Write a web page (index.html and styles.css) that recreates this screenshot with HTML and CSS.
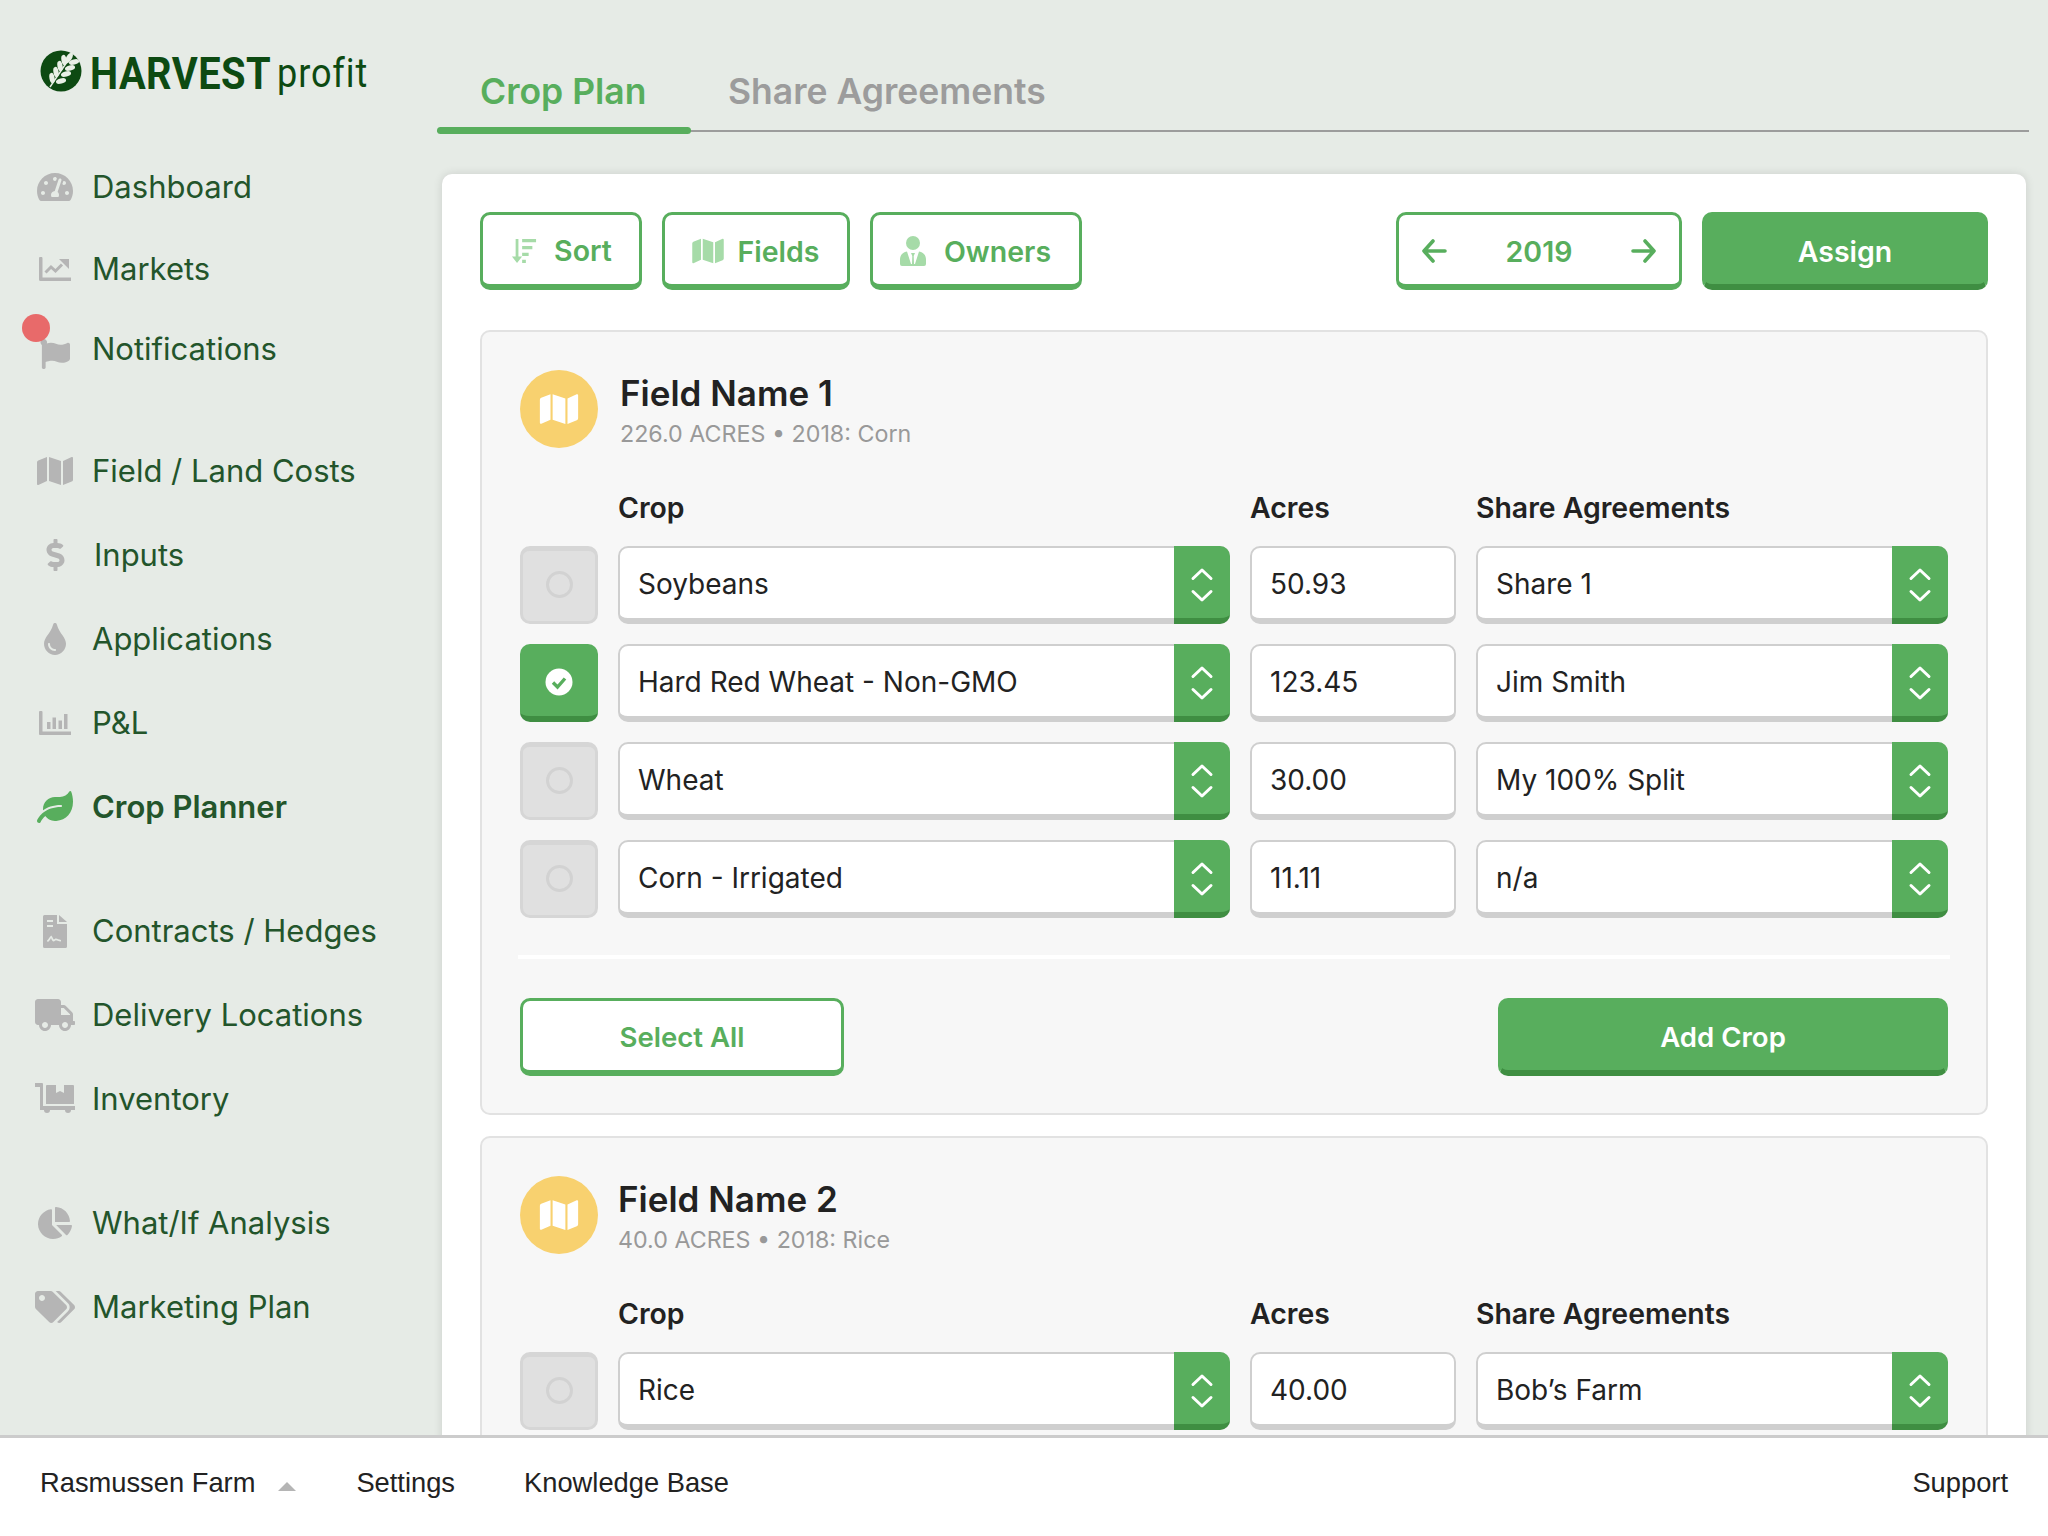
FILE: index.html
```html
<!DOCTYPE html>
<html lang="en">
<head>
  <meta charset="UTF-8" />
  <title>Harvest Profit - Crop Plan</title>
  <link rel="stylesheet" href="styles.css">
</head>
<body>
  <svg class="sprite" xmlns="http://www.w3.org/2000/svg">
    <symbol id="i-dash" viewBox="0 0 576 512"><path d="M288 32C128.94 32 0 160.94 0 320c0 52.8 14.25 102.26 39.06 144.8 5.61 9.62 16.3 15.2 27.44 15.2h443c11.14 0 21.83-5.58 27.44-15.2C561.75 422.26 576 372.8 576 320c0-159.06-128.94-288-288-288zm0 64c14.71 0 26.58 10.13 30.32 23.65-1.11 2.26-2.64 4.23-3.45 6.67l-9.22 27.67c-5.13 3.49-10.97 6.01-17.64 6.01-17.67 0-32-14.33-32-32S270.33 96 288 96zM96 384c-17.67 0-32-14.33-32-32s14.33-32 32-32 32 14.33 32 32-14.33 32-32 32zm48-160c-17.67 0-32-14.33-32-32s14.33-32 32-32 32 14.33 32 32-14.33 32-32 32zm246.77-72.41l-61.33 184C343.13 347.33 352 364.54 352 384c0 11.72-3.38 22.55-8.88 32H232.88c-5.5-9.45-8.88-20.28-8.88-32 0-33.94 26.5-61.43 59.9-63.59l61.34-184.01c4.17-12.56 17.73-19.45 30.36-15.17 12.57 4.19 19.35 17.79 15.17 30.36zm14.66 57.2l15.52-46.55c3.47-1.29 7.13-2.23 11.05-2.23 17.67 0 32 14.33 32 32s-14.33 32-32 32c-11.38-.01-20.89-6.28-26.57-15.22zM480 384c-17.67 0-32-14.33-32-32s14.33-32 32-32 32 14.33 32 32-14.33 32-32 32z"/></symbol>
    <symbol id="i-chart" viewBox="0 0 32 24"><path d="M0 1.500A1.500 1.500 0 0 1 3.500 1.500V20.500H32V24H1.500A1.500 1.500 0 0 1 0 22.500z"/><path d="M6.500 15.500l5.500-5.500 4.500 4 6.500-6.500" fill="none" stroke="currentColor" stroke-width="3"/><path d="M20 2h10v10z"/></symbol>
    <symbol id="i-flag" viewBox="0 0 512 512"><path d="M349.565 98.783C295.978 98.783 251.721 64 184.348 64c-24.955 0-47.309 4.384-68.045 12.013a55.947 55.947 0 0 0 3.586-23.562C118.117 24.015 94.806 1.206 66.338.048 34.345-1.254 8 24.296 8 56c0 19.026 9.497 35.825 24 45.945V488c0 13.255 10.745 24 24 24h16c13.255 0 24-10.745 24-24v-94.400c28.311-12.064 63.582-22.122 114.435-22.122 53.588 0 97.844 34.783 165.217 34.783 48.169 0 86.667-16.294 122.505-40.858C506.840 359.452 512 349.571 512 339.045v-243.100c0-23.393-24.269-38.870-45.485-29.016-34.338 15.948-76.454 31.854-116.950 31.854z"/></symbol>
    <symbol id="i-map" viewBox="0 0 576 512"><path d="M0 117.66v346.32c0 11.32 11.43 19.06 21.94 14.86L160 416V32L20.12 87.95A32.006 32.006 0 0 0 0 117.66zM192 416l192 64V96L192 32v384zM554.06 33.16L416 96v384l139.88-55.95A31.996 31.996 0 0 0 576 394.34V48.02c0-11.32-11.43-19.06-21.94-14.86z"/></symbol>
    <symbol id="i-dollar" viewBox="0 0 288 512"><path d="M209.2 233.4l-108-31.6C88.7 198.2 80 186.5 80 173.5c0-16.3 13.2-29.5 29.5-29.5h66.3c12.2 0 24.2 3.7 34.2 10.5 6.1 4.1 14.3 3.1 19.5-2l34.8-34c7.1-6.9 6.1-18.4-1.8-24.5C238 74.8 207.4 64.1 176 64V16c0-8.8-7.2-16-16-16h-32c-8.8 0-16 7.2-16 16v48h-2.5C45.8 64-5.4 118.7.5 183.6c4.2 46.1 39.4 83.6 83.8 96.6l102.5 30c12.5 3.7 21.2 15.3 21.2 28.3 0 16.3-13.2 29.5-29.5 29.5h-66.3C100 368 88 364.3 78 357.5c-6.1-4.1-14.3-3.1-19.5 2l-34.8 34c-7.1 6.9-6.1 18.4 1.8 24.5 24.5 19.2 55.1 29.9 86.5 30v48c0 8.8 7.2 16 16 16h32c8.8 0 16-7.2 16-16v-48.2c46.6-.9 90.3-28.6 105.7-72.7 21.5-61.6-14.6-124.8-72.5-141.7z"/></symbol>
    <symbol id="i-tint" viewBox="0 0 352 512"><path d="M205.22 22.09c-7.94-28.78-49.44-30.12-58.44 0C100.01 179.85 0 222.72 0 333.91 0 432.35 78.72 512 176 512s176-79.65 176-178.09c0-111.75-99.79-153.34-146.78-311.82zM176 448c-61.75 0-112-50.25-112-112 0-8.84 7.16-16 16-16s16 7.16 16 16c0 44.11 35.89 80 80 80 8.84 0 16 7.16 16 16s-7.16 16-16 16z"/></symbol>
    <symbol id="i-bars" viewBox="0 0 32 24"><path d="M0 1a1 1 0 0 1 1-1h1.500a1 1 0 0 1 1 1v19.500H32V24H1a1 1 0 0 1-1-1z"/><path d="M8 11h3.500v7H8zM13.500 6.500H17V18h-3.500zM19.500 9.500H23V18h-3.500zM25 3h3.500v15H25z"/></symbol>
    <symbol id="i-leaf" viewBox="0 0 576 512"><path d="M546.2 9.7c-5.6-12.5-21.6-13-28.3-1.2C486.9 62.4 431.4 96 368 96h-80C182 96 96 182 96 288c0 7 .8 13.7 1.5 20.5C161.3 262.8 253.4 224 384 224c8.8 0 16 7.2 16 16s-7.2 16-16 16C132.6 256 26 410.1 2.4 468c-6.6 16.3 1.2 34.9 17.5 41.6 16.4 6.8 35-1.100 41.800-17.300 1.500-3.600 20.900-47.900 71.900-90.600 32.400 43.900 94 85.800 174.900 77.200C465.500 465.900 576 348.500 576 171.300c0-51.600-11.100-114.600-29.800-161.600z"/></symbol>
    <symbol id="i-contract" viewBox="0 0 24 33"><path fill-rule="evenodd" d="M1.500 0H14v9h10v22.500a1.500 1.500 0 0 1-1.500 1.500h-21A1.500 1.500 0 0 1 0 31.500v-30A1.500 1.500 0 0 1 1.500 0zM4 5v2h6V5zM4 10v2h6v-2zM4 25.500l.6 1.500c1.400-.6 2.500-2 3.400-4 .8 2 1.500 3.500 2.600 3.500 1.200 0 1.500-1.200 2.400-1.200 1 0 2 1.200 5 1.200v-1.600c-2.200 0-3.400-1.300-5-1.300-1 0-1.600.7-2.200 1-.8-.9-1.300-2.700-2.600-4.100-1.600 1.500-2.600 3.700-4.200 5z"/><path d="M16 0l8 7h-8z"/></symbol>
    <symbol id="i-truck" viewBox="0 0 640 512"><path d="M624 352h-16V243.900c0-12.700-5.100-24.900-14.100-33.900L494 110.100c-9-9-21.200-14.100-33.900-14.100H416V48c0-26.500-21.500-48-48-48H48C21.500 0 0 21.500 0 48v320c0 26.500 21.500 48 48 48h16c0 53 43 96 96 96s96-43 96-96h128c0 53 43 96 96 96s96-43 96-96h48c8.800 0 16-7.200 16-16v-32c0-8.800-7.200-16-16-16zM160 464c-26.500 0-48-21.500-48-48s21.500-48 48-48 48 21.500 48 48-21.500 48-48 48zm320 0c-26.500 0-48-21.500-48-48s21.500-48 48-48 48 21.500 48 48-21.500 48-48 48zm80-208H416V144h44.100l99.900 99.900V256z"/></symbol>
    <symbol id="i-dolly" viewBox="0 0 40 32"><path d="M0 0h7a1 1 0 0 1 1 1v22h32v4h-4a3 3 0 0 1-6 0H15a3 3 0 0 1-6 0H5V4H0z"/><path fill-rule="evenodd" d="M12 2h26a1 1 0 0 1 1 1v18H11V3a1 1 0 0 1 1-1zm9 0v8l4-2 4 2V2z"/></symbol>
    <symbol id="i-pie" viewBox="0 0 544 512"><path d="M527.790 288H290.500l158.030 158.030c6.040 6.040 15.980 6.530 22.190.68 38.700-36.460 65.320-85.610 73.130-140.860 1.340-9.460-6.510-17.850-16.060-17.850zm-15.830-64.800C503.720 103.740 408.260 8.280 288.800.04 279.680-.59 272 7.100 272 16.240V240h223.770c9.140 0 16.820-7.680 16.190-16.800zM224 288V50.710c0-9.550-8.390-17.400-17.840-16.060C86.990 51.490-4.100 155.600.14 280.370 4.500 408.510 114.830 513.590 243.030 511.980c50.400-.63 96.970-16.870 135.260-44.030 7.900-5.600 8.420-17.230 1.570-24.080L224 288z"/></symbol>
    <symbol id="i-tags" viewBox="0 0 640 512"><path d="M497.941 225.941L286.059 14.059A48 48 0 0 0 252.118 0H48C21.490 0 0 21.490 0 48v204.118a48 48 0 0 0 14.059 33.941l211.882 211.882c18.744 18.745 49.136 18.746 67.882 0l204.118-204.118c18.745-18.745 18.745-49.137 0-67.882zM112 160c-26.510 0-48-21.490-48-48s21.490-48 48-48 48 21.490 48 48-21.490 48-48 48zm513.941 133.823L421.823 497.941c-18.745 18.745-49.137 18.745-67.882 0l-.36-.36L527.640 323.522c16.999-16.999 26.360-39.600 26.360-63.640s-9.362-46.641-26.360-63.640L331.397 0h48.721a48 48 0 0 1 33.941 14.059l211.882 211.882c18.745 18.745 18.745 49.137 0 67.882z"/></symbol>
    <symbol id="i-sort" viewBox="0 0 28 28"><path d="M5 1h3v19h4l-5.500 7L1 20h4z"/><path d="M12 1h15v3.500H12zM12 8.500h11V12H12zM12 16h7v3.500h-7zM12 23.500h4V27h-4z"/></symbol>
    <symbol id="i-owner" viewBox="0 0 26 30"><circle cx="13" cy="7" r="7"/><path d="M7 15.500L11 28h1l.3-8-1.300-3h4l-1.300 3 .3 8h1l4-12.500c4 .5 7 3.500 7 8V28a2 2 0 0 1-2 2H2a2 2 0 0 1-2-2v-4.500c0-4.500 3-7.500 7-8z"/></symbol>
    <symbol id="i-updown" viewBox="0 0 24 36"><path d="M3 11.500L12 3l9 8.500M3 24.500l9 8.500 9-8.500" fill="none" stroke="currentColor" stroke-width="3" stroke-linecap="round" stroke-linejoin="round"/></symbol>
    <symbol id="i-left" viewBox="0 0 26 24"><path d="M12 2L3 12l9 10M3 12h21" fill="none" stroke="currentColor" stroke-width="3.600" stroke-linecap="round" stroke-linejoin="round"/></symbol>
    <symbol id="i-right" viewBox="0 0 26 24"><path d="M14 2l9 10-9 10M23 12H2" fill="none" stroke="currentColor" stroke-width="3.600" stroke-linecap="round" stroke-linejoin="round"/></symbol>
  </svg>

  <div class="app">
    <div class="top">
      <aside class="sidebar">
        <div class="logo">
          <svg class="logo-mark" viewBox="0 0 42 42">
            <circle cx="21" cy="21" r="20.500" fill="#0d4a12"/>
            <g fill="#e9f0e6">
              <path d="M10 37L29 9" stroke="#e9f0e6" stroke-width="1.400"/>
              <ellipse cx="29" cy="8" rx="2.800" ry="6" transform="rotate(32 29 8)"/>
              <ellipse cx="24" cy="10" rx="2.600" ry="5.200" transform="rotate(-10 24 10)"/>
              <ellipse cx="34" cy="12" rx="2.600" ry="5.200" transform="rotate(75 34 12)"/>
              <ellipse cx="20" cy="16" rx="2.600" ry="5.200" transform="rotate(-10 20 16)"/>
              <ellipse cx="30" cy="18" rx="2.600" ry="5.200" transform="rotate(75 30 18)"/>
              <ellipse cx="16" cy="22" rx="2.600" ry="5.200" transform="rotate(-10 16 22)"/>
              <ellipse cx="26" cy="24" rx="2.600" ry="5.200" transform="rotate(75 26 24)"/>
              <ellipse cx="12" cy="28" rx="2.600" ry="5.200" transform="rotate(-10 12 28)"/>
              <ellipse cx="21" cy="31" rx="2.600" ry="5.200" transform="rotate(75 21 31)"/>
            </g>
          </svg>
          <span class="logo-harvest">HARVEST</span>
          <span class="logo-profit">profit</span>
        </div>

        <nav class="nav">
          <div class="nav-group nav-group--tight">
            <a class="nav-item"><span class="nav-icon"><svg class="ic-dash"><use href="#i-dash"/></svg></span>Dashboard</a>
            <a class="nav-item"><span class="nav-icon"><svg class="ic-chart"><use href="#i-chart"/></svg></span>Markets</a>
            <a class="nav-item"><span class="nav-icon"><svg class="ic-flag"><use href="#i-flag"/></svg></span>Notifications<span class="nav-dot"></span></a>
          </div>
          <div class="nav-group">
            <a class="nav-item"><span class="nav-icon"><svg class="ic-map"><use href="#i-map"/></svg></span>Field / Land Costs</a>
            <a class="nav-item"><span class="nav-icon"><svg class="ic-dollar"><use href="#i-dollar"/></svg></span><span class="nav-nudge">Inputs</span></a>
            <a class="nav-item"><span class="nav-icon"><svg class="ic-tint"><use href="#i-tint"/></svg></span>Applications</a>
            <a class="nav-item"><span class="nav-icon"><svg class="ic-chart"><use href="#i-bars"/></svg></span>P&amp;L</a>
            <a class="nav-item nav-item--active"><span class="nav-icon"><svg class="ic-leaf"><use href="#i-leaf"/></svg></span>Crop Planner</a>
          </div>
          <div class="nav-group">
            <a class="nav-item"><span class="nav-icon"><svg class="ic-contract"><use href="#i-contract"/></svg></span>Contracts / Hedges</a>
            <a class="nav-item"><span class="nav-icon"><svg class="ic-wide"><use href="#i-truck"/></svg></span>Delivery Locations</a>
            <a class="nav-item"><span class="nav-icon"><svg class="ic-wide"><use href="#i-dolly"/></svg></span>Inventory</a>
          </div>
          <div class="nav-group">
            <a class="nav-item"><span class="nav-icon"><svg class="ic-pie"><use href="#i-pie"/></svg></span>What/If Analysis</a>
            <a class="nav-item"><span class="nav-icon"><svg class="ic-wide"><use href="#i-tags"/></svg></span>Marketing Plan</a>
          </div>
        </nav>
      </aside>

      <main class="main">
        <div class="tabs">
          <a class="tab tab--active">Crop Plan</a>
          <a class="tab">Share Agreements</a>
        </div>

        <section class="card">
          <div class="toolbar">
            <button class="btn btn--sort"><svg class="btn-icon btn-icon--sort"><use href="#i-sort"/></svg><span class="btn-sort-label">Sort</span></button>
            <button class="btn btn--fields"><svg class="btn-icon btn-icon--map"><use href="#i-map"/></svg>Fields</button>
            <button class="btn btn--owners"><svg class="btn-icon btn-icon--owner"><use href="#i-owner"/></svg>Owners</button>
            <div class="toolbar-spacer"></div>
            <div class="btn btn--year">
              <svg class="year-arrow"><use href="#i-left"/></svg>
              <span>2019</span>
              <svg class="year-arrow"><use href="#i-right"/></svg>
            </div>
            <button class="btn btn--solid btn--assign">Assign</button>
          </div>

          <article class="field">
            <header class="field-head field-head--first">
              <span class="field-badge"><svg><use href="#i-map"/></svg></span>
              <div class="field-title">
                <h2 class="field-name">Field Name 1</h2>
                <p class="field-meta">226.0 ACRES • 2018: Corn</p>
              </div>
            </header>
            <div class="crop-grid crop-grid--labels">
              <span></span><span class="col-label">Crop</span><span class="col-label">Acres</span><span class="col-label">Share Agreements</span>
            </div>
            <div class="crop-grid">
              <span class="check"><span class="check-ring"></span></span>
              <div class="select">Soybeans<span class="select-arrow"><svg><use href="#i-updown"/></svg></span></div>
              <div class="input">50.93</div>
              <div class="select">Share 1<span class="select-arrow"><svg><use href="#i-updown"/></svg></span></div>
            </div>
            <div class="crop-grid">
              <span class="check check--on"><svg viewBox="0 0 28 28"><circle cx="14" cy="14" r="13.500" fill="#fff"/><path d="M8 14.500l4.500 4.500L20 10.500" fill="none" stroke="#58ae5d" stroke-width="3.400"/></svg></span>
              <div class="select">Hard Red Wheat - Non-GMO<span class="select-arrow"><svg><use href="#i-updown"/></svg></span></div>
              <div class="input">123.45</div>
              <div class="select">Jim Smith<span class="select-arrow"><svg><use href="#i-updown"/></svg></span></div>
            </div>
            <div class="crop-grid">
              <span class="check"><span class="check-ring"></span></span>
              <div class="select">Wheat<span class="select-arrow"><svg><use href="#i-updown"/></svg></span></div>
              <div class="input">30.00</div>
              <div class="select">My 100% Split<span class="select-arrow"><svg><use href="#i-updown"/></svg></span></div>
            </div>
            <div class="crop-grid">
              <span class="check"><span class="check-ring"></span></span>
              <div class="select">Corn - Irrigated<span class="select-arrow"><svg><use href="#i-updown"/></svg></span></div>
              <div class="input">11.11</div>
              <div class="select">n/a<span class="select-arrow"><svg><use href="#i-updown"/></svg></span></div>
            </div>
            <hr class="field-rule">
            <div class="field-actions">
              <button class="btn btn--select-all">Select All</button>
              <button class="btn btn--solid btn--add">Add Crop</button>
            </div>
          </article>

          <article class="field">
            <header class="field-head">
              <span class="field-badge"><svg><use href="#i-map"/></svg></span>
              <div class="field-title">
                <h2 class="field-name">Field Name 2</h2>
                <p class="field-meta">40.0 ACRES • 2018: Rice</p>
              </div>
            </header>
            <div class="crop-grid crop-grid--labels">
              <span></span><span class="col-label">Crop</span><span class="col-label">Acres</span><span class="col-label">Share Agreements</span>
            </div>
            <div class="crop-grid">
              <span class="check"><span class="check-ring"></span></span>
              <div class="select">Rice<span class="select-arrow"><svg><use href="#i-updown"/></svg></span></div>
              <div class="input">40.00</div>
              <div class="select">Bob’s Farm<span class="select-arrow"><svg><use href="#i-updown"/></svg></span></div>
            </div>
          </article>
        </section>
      </main>
    </div>

    <footer class="footer">
      <a class="footer-farm">Rasmussen Farm<span class="footer-caret"></span></a>
      <a class="footer-link footer-settings">Settings</a>
      <a class="footer-link">Knowledge Base</a>
      <a class="footer-link footer-support">Support</a>
    </footer>
  </div>
</body>
</html>
```

FILE: styles.css
```css
* {
  box-sizing: border-box;
}
body {
  margin: 0;
  font-family: Inter, "Liberation Sans", sans-serif;
  background: #e6ebe6;
  color: #222;
}
.sprite {
  display: none;
}
.app {
  width: 2048px;
  height: 1536px;
  display: flex;
  flex-direction: column;
  overflow: hidden;
}
.top {
  flex: 1;
  min-height: 0;
  display: flex;
  overflow: hidden;
}

/* sidebar */
.sidebar {
  width: 437px;
  flex: none;
}
.logo {
  display: flex;
  align-items: center;
  height: 42px;
  margin: 50px 0 0 40px;
  color: #0d4a12;
}
.logo-mark {
  width: 42px;
  height: 42px;
  flex: none;
}
.logo-harvest,
.logo-profit {
  display: inline-block;
  margin-top: 4px;
  font-family: Roboto, sans-serif;
  transform-origin: left center;
}
.logo-harvest {
  margin-left: 8px;
  margin-right: -24px;
  font-weight: 700;
  font-size: 45px;
  letter-spacing: 0.5px;
  transform: scaleX(0.885);
}
.logo-profit {
  margin-left: 6px;
  font-size: 41px;
  letter-spacing: 1px;
  transform: scaleX(0.88);
}
.nav {
  margin-top: 54px;
}
.nav-group {
  margin-bottom: 40px;
}
.nav-item {
  position: relative;
  display: flex;
  align-items: center;
  height: 84px;
  padding: 0 0 2px 35px;
  color: #23552b;
  font-size: 31px;
}
.nav-group--tight .nav-item {
  height: 82px;
}
.nav-group--tight .nav-item:last-child {
  height: 79px;
}
.nav-item--active {
  font-weight: 600;
}
.nav-nudge {
  margin-left: 2px;
}
.nav-icon {
  width: 40px;
  height: 40px;
  margin: 2px 17px 0 0;
  flex: none;
  display: flex;
  align-items: center;
  justify-content: center;
  color: #b5b5b5;
}
.nav-item--active .nav-icon {
  color: #58ae5d;
}
.nav-icon svg {
  fill: currentColor;
}
.ic-dash { width: 36px; height: 32px; }
.ic-chart { width: 32px; height: 24px; }
.ic-flag { width: 30px; height: 30px; margin-top: 8px; }
.ic-map { width: 36px; height: 32px; }
.ic-dollar { width: 19px; height: 32px; }
.ic-tint { width: 22px; height: 32px; }
.ic-leaf { width: 36px; height: 32px; }
.ic-contract { width: 24px; height: 33px; }
.ic-wide { width: 40px; height: 32px; }
.ic-pie { width: 34px; height: 32px; }
.nav-dot {
  position: absolute;
  left: 22px;
  top: 4px;
  width: 28px;
  height: 28px;
  border-radius: 50%;
  background: #e86a6a;
}

/* tabs + card */
.main {
  flex: 1;
  min-width: 0;
  padding-right: 19px;
}
.tabs {
  display: flex;
  height: 130px;
  margin-top: 2px;
  padding-top: 67px;
  border-bottom: 2px solid #9c9c9c;
}
.tab {
  position: relative;
  height: 46px;
  padding: 0 43px;
  color: #9c9c9c;
  font-size: 35.5px;
  font-weight: 600;
  line-height: 46px;
  white-space: nowrap;
}
.tab + .tab {
  padding-left: 37px;
}
.tab--active {
  width: 254px;
  color: #58ae5d;
}
.tab--active::after {
  content: "";
  position: absolute;
  left: 0;
  right: 0;
  top: 58px;
  height: 7px;
  border-radius: 4px;
  background: #58ae5d;
}
.card {
  width: 1584px;
  height: 1500px;
  margin: 42px 0 0 5px;
  padding: 38px;
  background: #fff;
  border-radius: 10px;
  box-shadow: 0 0 10px rgba(0, 0, 0, 0.12);
}
.toolbar {
  display: flex;
  gap: 20px;
  margin-bottom: 40px;
}
.toolbar-spacer {
  flex: 1;
}

/* buttons */
.btn {
  display: flex;
  align-items: center;
  justify-content: center;
  height: 78px;
  padding: 3px 0 0;
  background: #fff;
  border: 3px solid #58ae5d;
  border-bottom-width: 6px;
  border-radius: 10px;
  color: #58ae5d;
  font-family: inherit;
  font-size: 28.5px;
  font-weight: 600;
}
.btn--sort { width: 162px; }
.btn--fields { width: 188px; padding-right: 1px; }
.btn--owners { width: 212px; padding-right: 1px; }
.btn--year {
  width: 286px;
  justify-content: space-between;
  padding: 3px 22px 0;
}
.btn--solid {
  background: #58ae5d;
  border-color: #58ae5d;
  border-bottom-color: #3f8e42;
  color: #fff;
}
.btn--assign { width: 286px; }
.btn--select-all { width: 324px; font-size: 27.6px; }
.btn--add { width: 450px; font-size: 27.6px; }
.btn-sort-label {
  margin-bottom: 2px;
}
.btn-icon {
  margin-right: 16px;
  fill: #a6dba8;
}
.btn-icon--sort { width: 28px; height: 26px; }
.btn-icon--map { width: 32px; height: 28px; margin-right: 14px; }
.btn-icon--owner { width: 26px; height: 30px; margin-right: 18px; }
.year-arrow {
  width: 26px;
  height: 24px;
  color: #58ae5d;
}

/* field panels */
.field {
  margin-bottom: 21px;
  padding: 38px 38px 37px;
  background: #f7f7f7;
  border: 2px solid #e2e2e2;
  border-radius: 10px;
}
.field-head {
  display: flex;
  align-items: center;
  gap: 20px;
  height: 78px;
  margin-bottom: 43px;
}
.field-head--first {
  gap: 22px;
}
.field-title {
  padding-top: 2px;
}
.field-badge {
  width: 78px;
  height: 78px;
  flex: none;
  display: flex;
  align-items: center;
  justify-content: center;
  border-radius: 50%;
  background: #f8d16f;
}
.field-badge svg {
  width: 40px;
  height: 34px;
  fill: #fff;
}
.field-name {
  margin: 0;
  color: #222;
  font-size: 35px;
  font-weight: 600;
  line-height: 44px;
}
.field-meta {
  margin: 4px 0 0;
  color: #999;
  font-size: 23.25px;
  line-height: 30px;
}
.crop-grid {
  display: grid;
  grid-template-columns: 78px 612px 206px 472px;
  gap: 20px;
  margin-bottom: 20px;
}
.crop-grid--labels {
  height: 34px;
  margin-bottom: 21px;
}
.col-label {
  color: #222;
  font-size: 28.4px;
  font-weight: 600;
  line-height: 34px;
}
.check {
  height: 78px;
  display: flex;
  align-items: center;
  justify-content: center;
  background: #e0e0e0;
  border: 3px solid #d6d6d6;
  border-top-width: 5px;
  border-radius: 10px;
}
.check-ring {
  width: 27px;
  height: 27px;
  margin-bottom: 3px;
  border: 3px solid #d2d2d2;
  border-radius: 50%;
}
.check--on {
  background: #58ae5d;
  border: 0;
  border-bottom: 6px solid #3f8e42;
}
.check--on svg {
  width: 28px;
  height: 28px;
  margin-top: 3px;
}
.select,
.input {
  position: relative;
  height: 78px;
  display: flex;
  align-items: center;
  padding: 2px 18px 0;
  background: #fff;
  border: 2px solid #cfcfcf;
  border-bottom-width: 6px;
  border-radius: 10px;
  color: #222;
  font-size: 28px;
}
.select-arrow {
  position: absolute;
  top: -2px;
  right: -2px;
  bottom: -6px;
  width: 56px;
  display: flex;
  align-items: center;
  justify-content: center;
  padding-top: 6px;
  background: #58ae5d;
  border-bottom: 6px solid #3f8e42;
  border-radius: 0 10px 10px 0;
  color: #fff;
}
.select-arrow svg {
  width: 24px;
  height: 36px;
}
.field-rule {
  height: 4px;
  margin: 37px -2px 39px;
  background: #fff;
  border: 0;
}
.field-actions {
  display: flex;
  justify-content: space-between;
}

/* footer */
.footer {
  flex: none;
  height: 101px;
  display: flex;
  align-items: center;
  padding: 0 40px 8px;
  background: #fff;
  border-top: 3px solid #ccc;
  font-family: "Liberation Sans", Arial, sans-serif;
  font-size: 27.3px;
  color: #222;
}
.footer-farm {
  display: flex;
  align-items: center;
  margin-right: 60px;
}
.footer-caret {
  width: 0;
  height: 0;
  margin: 6px 0 0 23px;
  border-left: 9px solid transparent;
  border-right: 9px solid transparent;
  border-bottom: 9px solid #b5b5b5;
}
.footer-link {
  margin-right: 71px;
}
.footer-settings {
  margin-right: 69px;
}
.footer-support {
  margin: 0 0 0 auto;
}
```
